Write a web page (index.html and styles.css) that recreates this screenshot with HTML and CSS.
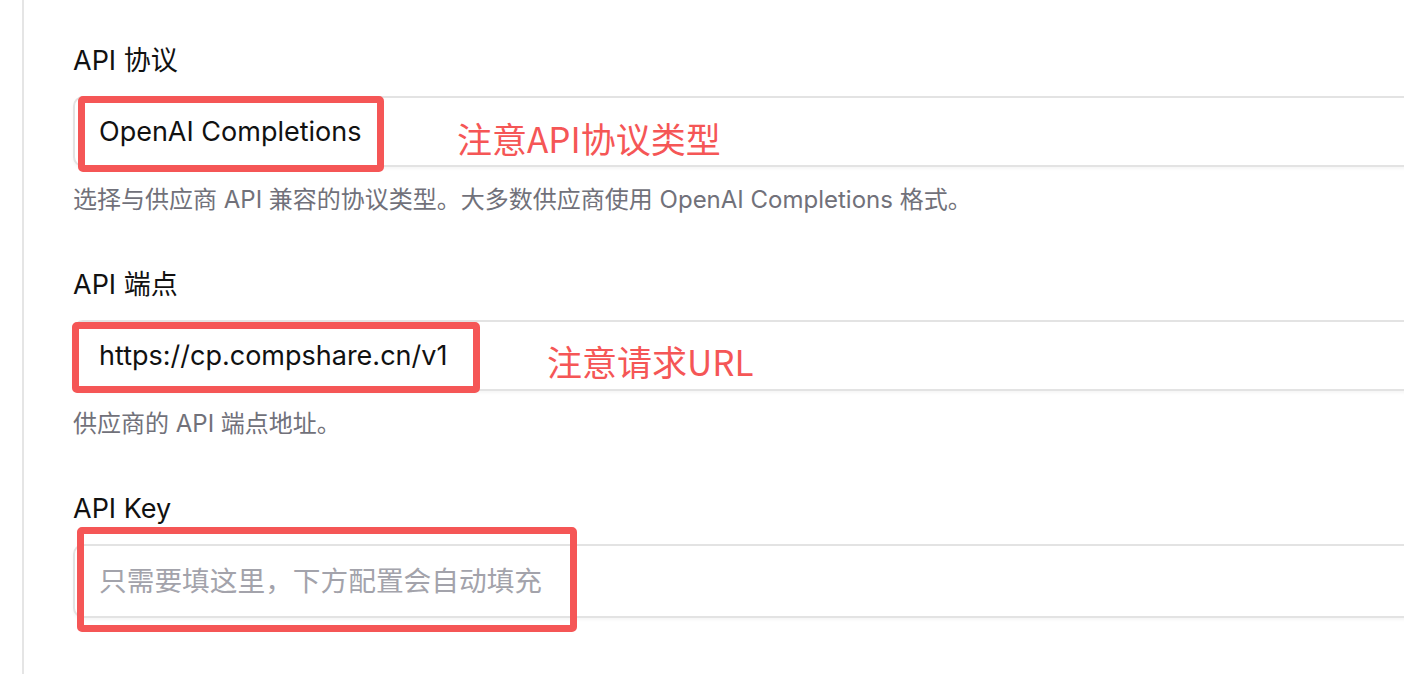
FILE: index.html
```html
<!DOCTYPE html>
<html lang="zh-CN">
<head>
<meta charset="utf-8">
<title>API 设置</title>
<link rel="stylesheet" href="styles.css">
</head>
<body>
<div class="page">
  <div class="panel">
    <div class="field">
      <div class="label">API 协议</div>
      <div class="control">
        <div class="input">OpenAI Completions</div>
        <div class="mark mark-1"></div>
        <div class="note note-1">注意API协议类型</div>
      </div>
      <div class="help">选择与供应商 API 兼容的协议类型。大多数供应商使用 OpenAI Completions 格式。</div>
    </div>
    <div class="field">
      <div class="label">API 端点</div>
      <div class="control">
        <div class="input">https://cp.compshare.cn/v1</div>
        <div class="mark mark-2"></div>
        <div class="note note-2">注意请求URL</div>
      </div>
      <div class="help">供应商的 API 端点地址。</div>
    </div>
    <div class="field">
      <div class="label">API Key</div>
      <div class="control">
        <div class="input input-key placeholder">只需要填这里，下方配置会自动填充</div>
        <div class="mark mark-3"></div>
      </div>
    </div>
  </div>
</div>
</body>
</html>
```

FILE: styles.css
```css
*, *::before, *::after {
  box-sizing: border-box;
}

html, body {
  margin: 0;
  padding: 0;
  background: #ffffff;
  overflow: hidden;
}

body {
  font-family: Inter, "Noto Sans CJK SC", sans-serif;
  color: #111111;
  width: 1404px;
  height: 674px;
}

.page {
  height: 674px;
  padding-left: 22px;
}

.panel {
  height: 100%;
  border-left: 2px solid #e5e5e5;
  padding: 43px 0 0 49px;
  margin-right: -40px;
  display: flex;
  flex-direction: column;
  gap: 50px;
}

.field {
  display: flex;
  flex-direction: column;
}

.label {
  font-size: 27px;
  line-height: 36px;
  font-weight: 400;
  color: #111111;
  margin-bottom: 17px;
}

.control {
  position: relative;
}

.input {
  height: 71px;
  border: 2px solid #e3e3e3;
  border-radius: 10px;
  box-shadow: 0 2px 3px rgba(0, 0, 0, 0.04);
  padding-left: 24px;
  font-size: 27px;
  line-height: 67px;
  color: #111111;
  background: #ffffff;
}

.input-key {
  height: 74px;
  line-height: 70px;
}

.placeholder {
  color: #a3a3ab;
  font-size: 27.7px;
}

.help {
  margin-top: 16px;
  font-size: 24px;
  line-height: 34px;
  color: #71717a;
}

.mark {
  position: absolute;
  border: 7px solid #f55656;
  border-radius: 5px;
}

.mark-1 {
  left: 5px;
  top: 0;
  width: 306px;
  height: 76px;
}

.mark-2 {
  left: -1px;
  top: 2px;
  width: 408px;
  height: 71px;
}

.mark-3 {
  left: 4px;
  top: -17px;
  width: 500px;
  height: 105px;
}

.note {
  position: absolute;
  font-family: "Noto Sans CJK SC", sans-serif;
  font-size: 35px;
  line-height: 40px;
  color: #f55656;
  white-space: nowrap;
}

.note-1 {
  left: 384px;
  top: 22px;
}

.note-2 {
  left: 474px;
  top: 21px;
}
```
